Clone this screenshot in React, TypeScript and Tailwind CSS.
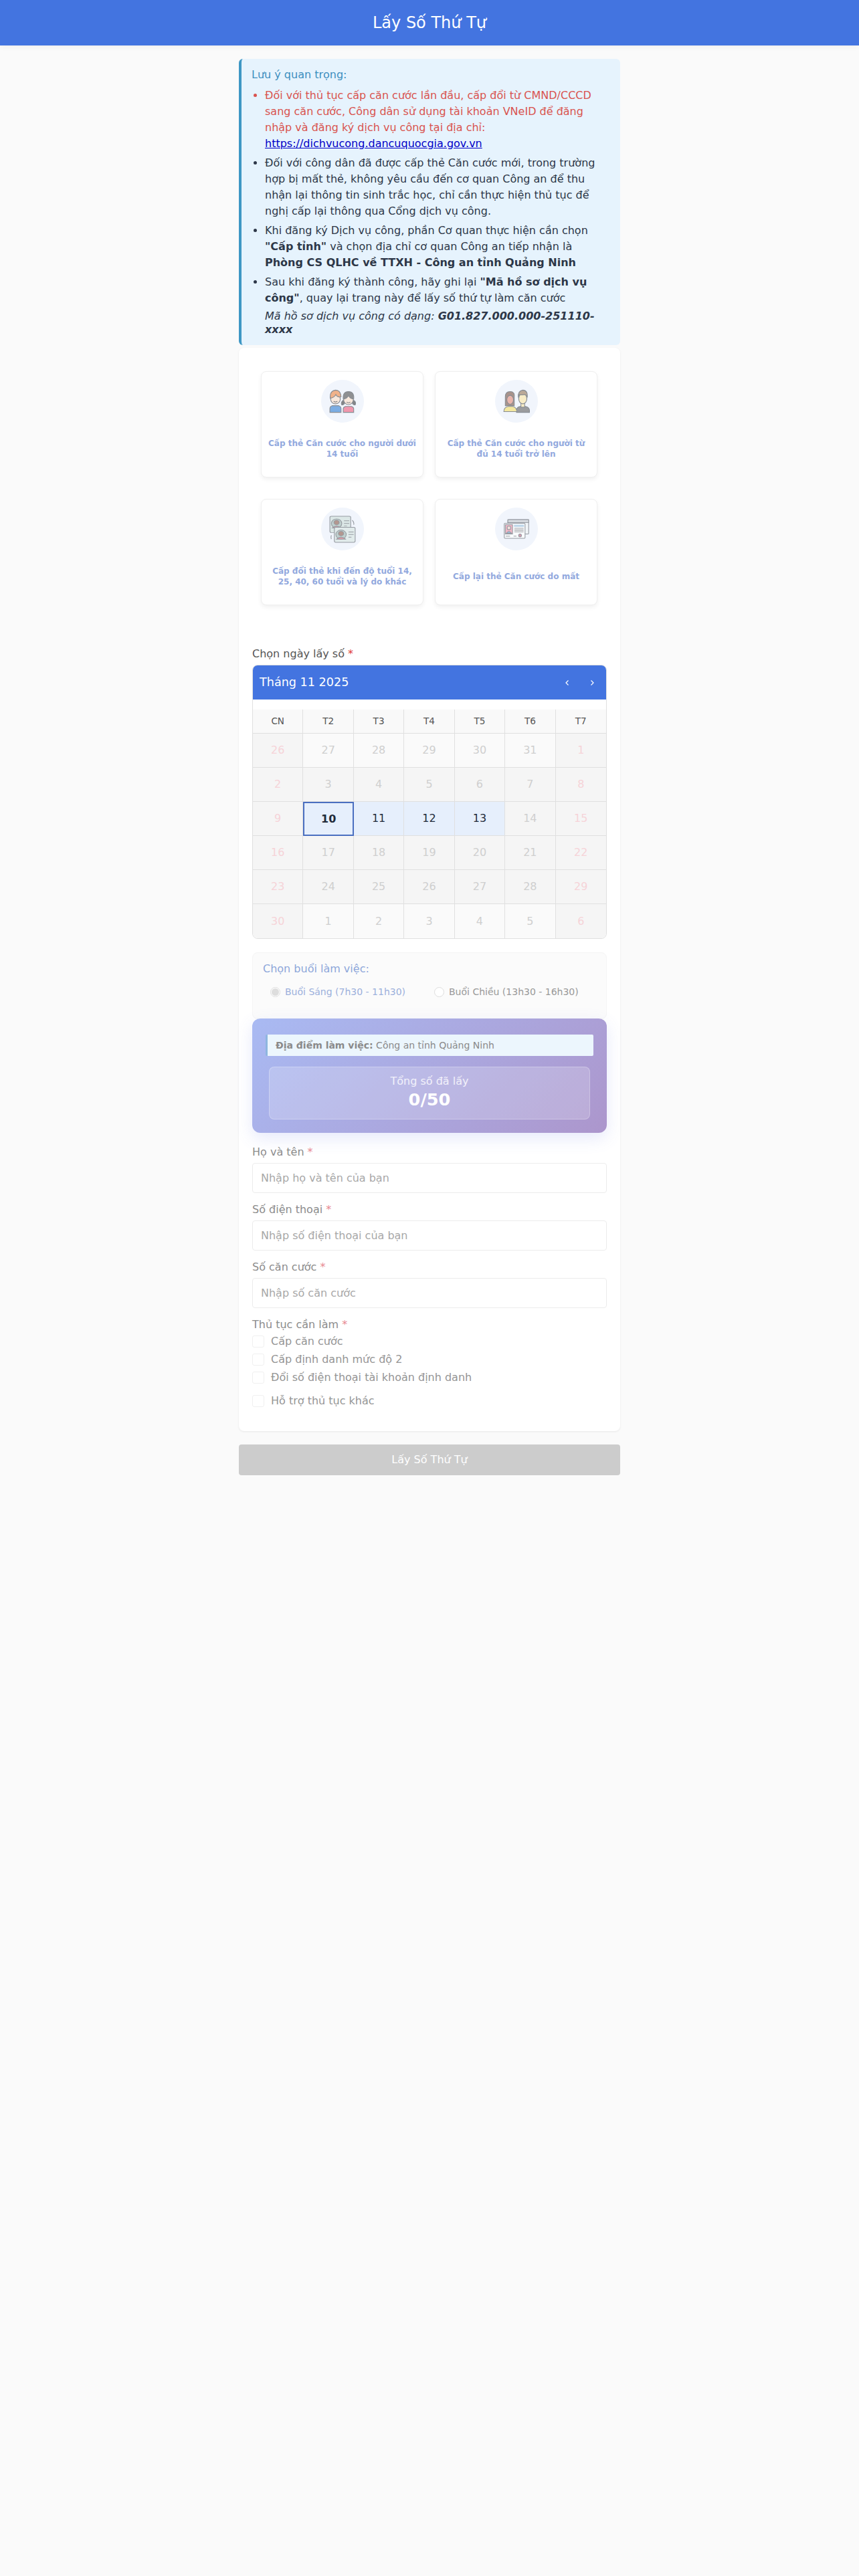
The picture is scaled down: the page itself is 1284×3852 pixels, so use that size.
import React from "react";

const Kids = () => (
  <svg viewBox="0 0 36 32" className="w-[40px] h-[36px] opacity-70">
    <g stroke="#5b6168" strokeWidth="1">
      <path d="M1 31v-5q0-3 3-4h9q3 1 3 4v5z" fill="#4a90d9" />
      <circle cx="8.500" cy="13" r="6.500" fill="#fbe3cf" />
      <path d="M1.500 12q-1-10 7-11 7 0 7.500 9-5 1-7-3-2 4-7.500 5z" fill="#f0965a" />
      <path d="M19 31v-5q0-2 3-3h8q3 1 3 3v5z" fill="#f0708c" />
      <path d="M20 14q-5 3-3 7 3 0 4-3zM32 14q5 3 3 7-3 0-4-3z" fill="#555" />
      <circle cx="26" cy="14" r="6.500" fill="#fbe3cf" />
      <path d="M19 13q-1-10 7-10t7 10q-5 0-7-5-2 5-7 5z" fill="#666" />
    </g>
    <path d="M6 16q2.500 2 5 0M23.500 17q2.500 2 5 0" stroke="#555" fill="none" />
  </svg>
);

const Adults = () => (
  <svg viewBox="0 0 36 32" className="w-[40px] h-[36px] opacity-70">
    <g stroke="#5b6168" strokeWidth="1">
      <path d="M18 31v-3q0-4 5-5h7q5 1 5.500 5v3z" fill="#777" />
      <path d="M1 30q0-6 6-7h6q5 1 5.500 7z" fill="#f5e27a" />
      <path d="M3 22V10q0-7 6.500-7T15 10v12z" fill="#8a6a5c" />
      <ellipse cx="9.500" cy="14" rx="4.500" ry="6" fill="#e79a8a" />
      <rect x="24" y="17" width="5" height="7" fill="#fbe9b0" />
      <ellipse cx="26.500" cy="12.500" rx="5.500" ry="7" fill="#fbe9b0" />
      <path d="M20.500 11q-1-9 6-10 7 0 6 10-1-4-4-4-4 1-6.500 0-1 1-1.500 4z" fill="#a58a6d" />
    </g>
  </svg>
);

const Exchange = () => (
  <svg viewBox="0 0 36 42" className="w-[40px] h-[41px] opacity-60" preserveAspectRatio="none">
    <g stroke="#5b6168" strokeWidth="1">
      <rect x="1" y="1" width="28" height="25" rx="2" fill="#cfe0da" />
      <circle cx="10" cy="12" r="7" fill="#9fb8b0" />
      <circle cx="10" cy="10.500" r="3.500" fill="#8a5a48" />
      <path d="M4 19q6-6 12 0z" fill="#d0606c" />
      <path d="M20 8h7M20 12h7M20 16h4" fill="none" />
      <rect x="7" y="18" width="28" height="23" rx="2" fill="#d8e6e0" />
      <circle cx="16" cy="29" r="7" fill="#9fb8b0" />
      <circle cx="16" cy="27.500" r="3.500" fill="#8a5a48" />
      <path d="M10 36q6-6 12 0z" fill="#d0606c" />
      <path d="M26 25h7M26 29h7M26 33h4" fill="none" />
      <path d="M31 7q3 3 2 7M3 36q-1-3 0-6" fill="none" />
    </g>
  </svg>
);

const Lost = () => (
  <svg viewBox="0 0 36 28" className="w-[40px] h-[30px] opacity-60">
    <g stroke="#5b6168" strokeWidth="1">
      <rect x="6" y="1" width="29" height="20" rx="1" fill="#f2f5f6" />
      <rect x="6" y="1" width="29" height="4" fill="#c8ccd0" />
      <rect x="1" y="6" width="29" height="21" rx="1" fill="#fff" />
      <rect x="2.500" y="8" width="10" height="13" fill="#ee8fa3" />
      <circle cx="7.500" cy="12.500" r="2.500" fill="#f5d6c8" />
      <path d="M4 20q3.500-5 7 0z" fill="#5a98c8" />
      <rect x="14.500" y="8" width="14" height="3" fill="#9cc2dc" stroke="none" />
      <path d="M15 13h13M15 15.500h13M15 18h13M3 24h6M14 24h4" fill="none" stroke="#666" />
      <circle cx="23" cy="23" r="2" fill="#c8607c" />
    </g>
  </svg>
);

const services = [
  { icon: <Kids />, title: "Cấp thẻ Căn cước cho người dưới 14 tuổi" },
  { icon: <Adults />, title: "Cấp thẻ Căn cước cho người từ đủ 14 tuổi trở lên" },
  { icon: <Exchange />, title: "Cấp đổi thẻ khi đến độ tuổi 14, 25, 40, 60 tuổi và lý do khác" },
  { icon: <Lost />, title: "Cấp lại thẻ Căn cước do mất" },
];

const weeks = [
  [26, 27, 28, 29, 30, 31, 1],
  [2, 3, 4, 5, 6, 7, 8],
  [9, 10, 11, 12, 13, 14, 15],
  [16, 17, 18, 19, 20, 21, 22],
  [23, 24, 25, 26, 27, 28, 29],
  [30, 1, 2, 3, 4, 5, 6],
];

const Req = ({ faded }: { faded?: boolean }) => (
  <span className={faded ? "text-[#e88a92]" : "text-[#e03a3a]"}> *</span>
);

const Field = ({ label, placeholder }: { label: string; placeholder: string }) => (
  <div className="mb-[16px]">
    <div className="text-[16px] leading-[18px] mb-[7px] text-[#8c8c8c]">
      {label}
      <Req faded />
    </div>
    <input
      readOnly
      placeholder={placeholder}
      className="block w-full h-[45px] px-[12px] text-[16px] border border-[#ececec] rounded-[4px] bg-white placeholder:text-[#a8a8a8] outline-none"
    />
  </div>
);

const Check = ({ label, cls }: { label: string; cls: string }) => (
  <div className={`flex items-center ${cls}`}>
    <span className="w-[18px] h-[18px] border border-[#f0f0f0] rounded-[3px] bg-white mr-[10px]" />
    <span className="text-[16px] leading-[18px] text-[#959595]">{label}</span>
  </div>
);

export default function App() {
  return (
    <div className="min-h-[3852px] bg-[#fafafa] text-[#2d3748] font-['DejaVu_Sans','Liberation_Sans',sans-serif]">
      <header className="h-[68px] bg-[#4374e0] flex items-center justify-center text-white text-[24px] shadow-[0_2px_8px_rgba(0,0,0,0.05)]">
        Lấy Số Thứ Tự
      </header>

      <main className="w-[570px] mx-auto pt-[20px]">
        <section className="bg-[#e6f3fd] border-l-[4px] border-[#3e97c4] rounded-[6px] pl-[15px] pr-[15px] pt-[12px] pb-[13px] text-[16px] leading-[24px]">
          <div className="text-[#3d8fbf] mb-[7px]">Lưu ý quan trọng:</div>
          <ul className="list-disc pl-[20px] marker:text-[#2d3748]">
            <li className="mb-[5px] text-[#d9534f] marker:text-[#d9534f]">
              Đối với thủ tục cấp căn cước lần đầu, cấp đổi từ CMND/CCCD sang căn cước, Công dân sử dụng tài khoản VNeID để đăng nhập và đăng ký dịch vụ công tại địa chỉ:{" "}
              <a href="#" className="text-[#0000c8] underline">https://dichvucong.dancuquocgia.gov.vn</a>
            </li>
            <li className="mb-[5px]">
              Đối với công dân đã được cấp thẻ Căn cước mới, trong trường hợp bị mất thẻ, không yêu cầu đến cơ quan Công an để thu nhận lại thông tin sinh trắc học, chỉ cần thực hiện thủ tục để nghị cấp lại thông qua Cổng dịch vụ công.
            </li>
            <li className="mb-[5px]">
              Khi đăng ký Dịch vụ công, phần Cơ quan thực hiện cần chọn <b>"Cấp tỉnh"</b> và chọn địa chỉ cơ quan Công an tiếp nhận là <b>Phòng CS QLHC về TTXH - Công an tỉnh Quảng Ninh</b>
            </li>
            <li>
              Sau khi đăng ký thành công, hãy ghi lại <b>"Mã hồ sơ dịch vụ công"</b>, quay lại trang này để lấy số thứ tự làm căn cước
              <div className="italic leading-[20px] mt-[5px]">
                Mã hồ sơ dịch vụ công có dạng: <b>G01.827.000.000-251110-xxxx</b>
              </div>
            </li>
          </ul>
        </section>

        <section className="mt-[4px] bg-white rounded-[8px] shadow-[0_1px_3px_rgba(0,0,0,0.08)] px-[20px] h-[1620px]">
          <div className="grid grid-cols-[243px_243px] gap-x-[17px] gap-y-[32px] pt-[35px] px-[13px]">
            {services.map((s) => (
              <div key={s.title} className="h-[159px] bg-white border border-[#efefef] rounded-[8px] shadow-[0_3px_6px_rgba(0,0,0,0.06)] flex flex-col items-center px-[10px] pt-[12px] pb-[12px]">
                <div className="w-[64px] h-[64px] shrink-0 rounded-full bg-[#f1f5fc] flex items-center justify-center">{s.icon}</div>
                <div className="flex-1 w-full flex items-center justify-center text-center text-[12px] leading-[16px] font-bold text-[#92a9de] pt-[8px]">
                  {s.title}
                </div>
              </div>
            ))}
          </div>

          <div className="mt-[64px] text-[16px] leading-[18px] text-[#555]">
            Chọn ngày lấy số
            <Req />
          </div>

          <div className="mt-[7px] border border-[#e0e0e0] rounded-[8px] overflow-hidden bg-white">
            <div className="h-[51px] bg-[#4374e0] text-white flex items-center justify-between pl-[10px] pr-[15px]">
              <span className="text-[17.600px]">Tháng 11 2025</span>
              <span className="flex gap-[25px] text-[14px]">
                <svg width="12" height="12" viewBox="0 0 12 12" fill="none" stroke="#fff" strokeWidth="1.200"><path d="M7.500 2.500 4 6l3.500 3.500" /></svg>
                <svg width="12" height="12" viewBox="0 0 12 12" fill="none" stroke="#fff" strokeWidth="1.200"><path d="M4.500 2.500 8 6l-3.500 3.500" /></svg>
              </span>
            </div>
            <div className="mt-[15px] grid grid-cols-7 bg-[#f9f9f9]">
              {["CN", "T2", "T3", "T4", "T5", "T6", "T7"].map((d) => (
                <div key={d} className="h-[36px] flex items-center justify-center text-[13.600px] text-[#555] border-r border-b border-[#e0e0e0] last:border-r-0">{d}</div>
              ))}
            </div>
            <div className="grid grid-cols-7">
              {weeks.flatMap((w, wi) =>
                w.map((d, di) => {
                  const weekend = di === 0 || di === 6;
                  const avail = wi === 2 && di >= 1 && di <= 4;
                  const today = wi === 2 && di === 1;
                  const light = (wi === 0 || wi === 5) && !weekend;
                  return (
                    <div
                      key={`${wi}-${di}`}
                      className={`h-[51px] flex items-center justify-center text-[16px] border-r border-b border-[#e0e0e0] ${di === 6 ? "border-r-0" : ""} ${wi === 5 ? "border-b-0" : ""} ${
                        today
                          ? "!border-2 !border-[#4a6fc0] bg-[#e6effc] font-bold text-[#222b3a]"
                          : avail
                            ? "bg-[#e6effc] text-[#222b3a]"
                            : weekend
                              ? "bg-[#f5f5f5] text-[#f6d3d8]"
                              : light
                                ? "bg-[#fafafa] text-[#cfcfcf]"
                                : "bg-[#f5f5f5] text-[#cfcfcf]"
                      }`}
                    >
                      {d}
                    </div>
                  );
                })
              )}
            </div>
          </div>

          <div className="mt-[20px] h-[100px] bg-[#fbfbfb] border border-[#f5f5f5] rounded-[8px] pl-[15px] pt-[13px]">
            <div className="text-[16px] leading-[22px] text-[#8ea7da]">Chọn buổi làm việc:</div>
            <div className="flex mt-[14px] text-[14px] leading-[18px]">
              <label className="flex items-center w-[256px] pl-[11px]">
                <span className="w-[15px] h-[15px] rounded-full border border-[#ddd] bg-white flex items-center justify-center mr-[7px]">
                  <span className="w-[11px] h-[11px] rounded-full bg-[#ddd]" />
                </span>
                <span className="text-[#9bb0dc]">Buổi Sáng (7h30 - 11h30)</span>
              </label>
              <label className="flex items-center">
                <span className="w-[15px] h-[15px] rounded-full border border-[#ddd] bg-white mr-[7px]" />
                <span className="text-[#999]">Buổi Chiều (13h30 - 16h30)</span>
              </label>
            </div>
          </div>

          <div className="-mt-px h-[171px] rounded-[12px] bg-[linear-gradient(135deg,#a9baf3,#ac96cc)] shadow-[0_8px_24px_rgba(100,120,230,0.16)] px-[20px] pt-[24px]">
            <div className="h-[32px] bg-[#ecf6fd] border-l-[3px] border-[#8eb6df] rounded-[2px] flex items-center pl-[12px] text-[14px] text-[#8a8a8a]">
              <b>Địa điểm làm việc:</b>&nbsp;Công an tỉnh Quảng Ninh
            </div>
            <div className="mt-[16px] mx-[5px] h-[79px] rounded-[8px] bg-white/20 border border-white/25 flex flex-col items-center pt-[11px] text-white">
              <div className="text-[16px] leading-[20px] text-white/80">Tổng số đã lấy</div>
              <div className="text-[25.600px] leading-[34px] font-bold">0/50</div>
            </div>
          </div>

          <div className="mt-[20px]">
            <Field label="Họ và tên" placeholder="Nhập họ và tên của bạn" />
            <Field label="Số điện thoại" placeholder="Nhập số điện thoại của bạn" />
            <Field label="Số căn cước" placeholder="Nhập số căn cước" />
            <div className="text-[16px] leading-[18px] text-[#8c8c8c]">
              Thủ tục cần làm
              <Req faded />
            </div>
            <Check label="Cấp căn cước" cls="mt-[7px]" />
            <Check label="Cấp định danh mức độ 2" cls="mt-[9px]" />
            <Check label="Đổi số điện thoại tài khoản định danh" cls="mt-[9px]" />
            <Check label="Hỗ trợ thủ tục khác" cls="mt-[17px]" />
          </div>
        </section>

        <button className="mt-[20px] block w-full h-[46px] bg-[#cccccc] rounded-[4px] text-white text-[16px]">
          Lấy Số Thứ Tự
        </button>
      </main>
    </div>
  );
}
